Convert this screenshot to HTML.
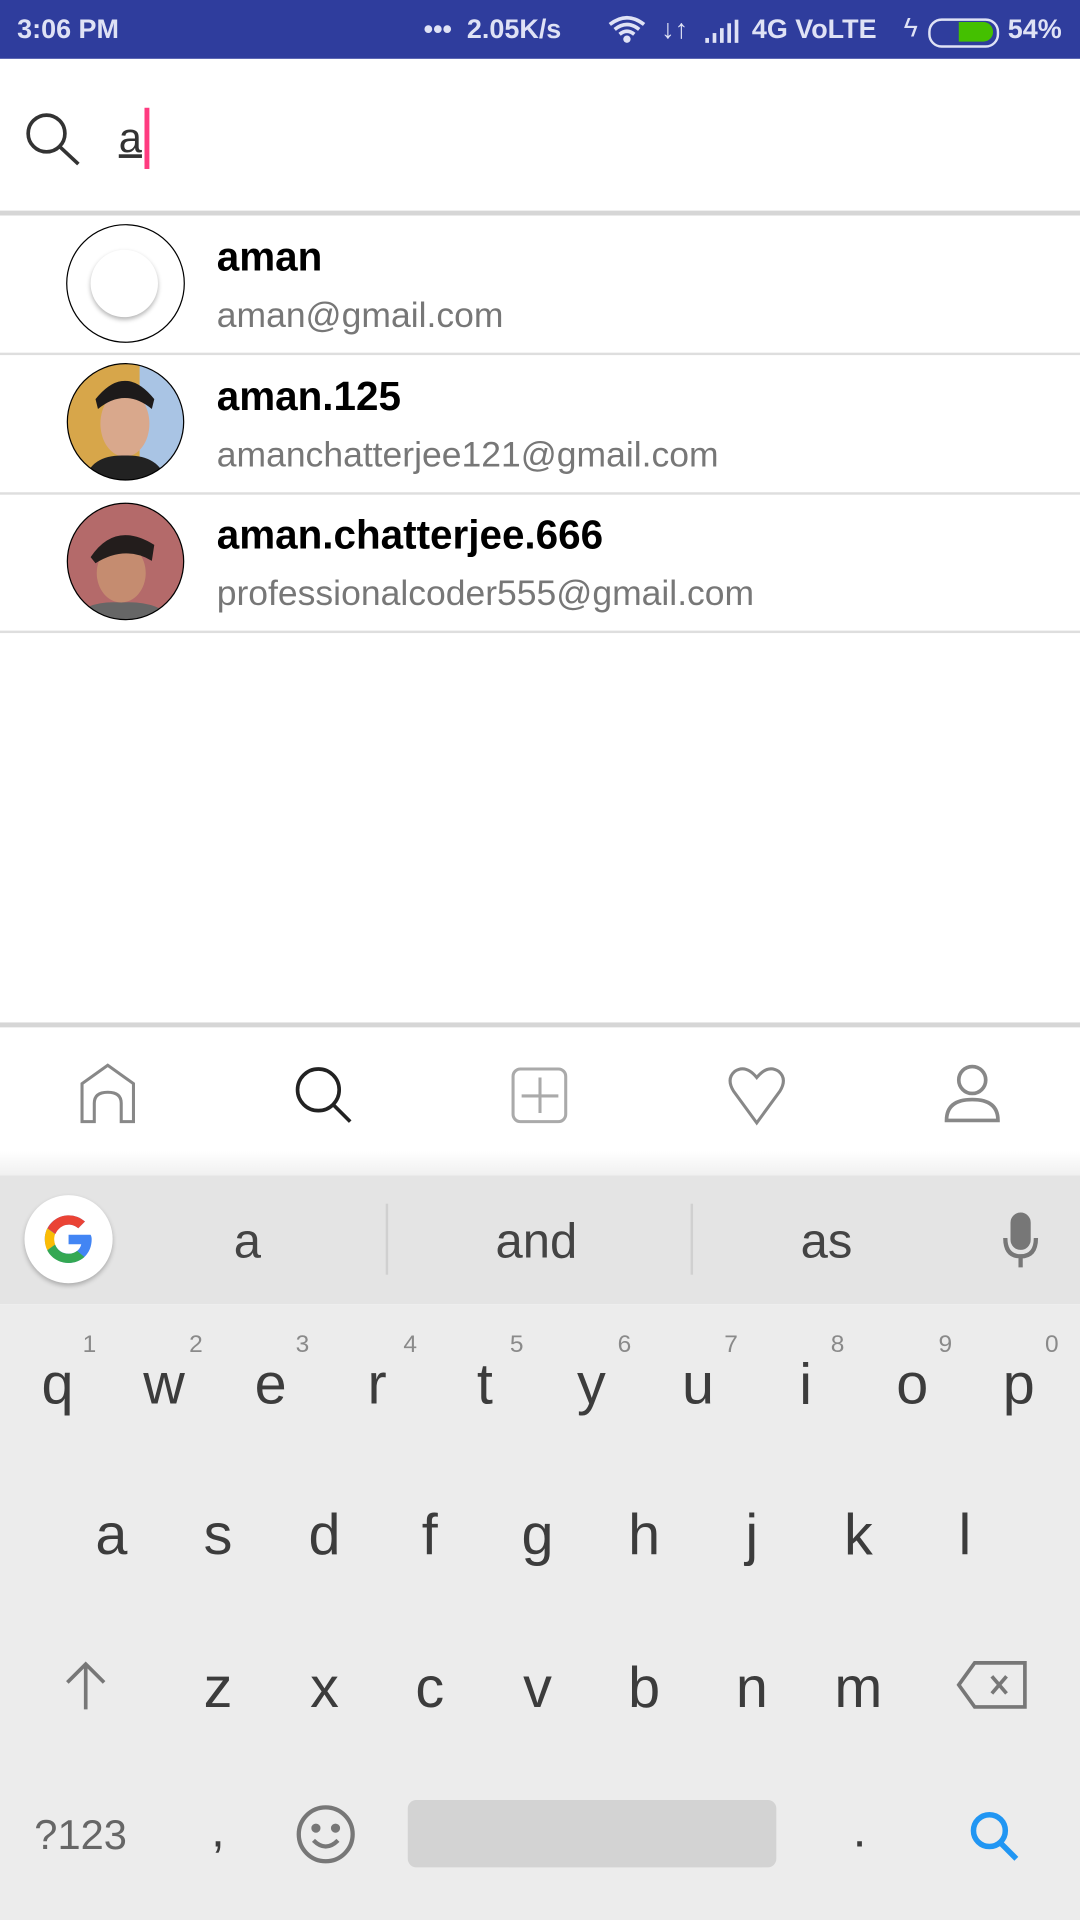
<!DOCTYPE html>
<html><head><meta charset="utf-8"><style>
html,body{margin:0;padding:0;width:1080px;height:1920px;overflow:hidden;background:#fff}
#s{position:absolute;left:0;top:0;width:882px;height:1568px;transform:scale(1.22449);transform-origin:0 0;font-family:"Liberation Sans",sans-serif}
.a{position:absolute}
.k{position:absolute;font-size:47px;color:#3c3c3c;width:60px;text-align:center;margin-left:-30px;line-height:1}
.n{position:absolute;font-size:20px;color:#8a8a8a;width:20px;text-align:center;margin-left:-10px;line-height:1}
.name{position:absolute;left:177px;font-size:33px;font-weight:bold;color:#000;line-height:1}
.mail{position:absolute;left:177px;font-size:29px;color:#777;line-height:1}
.sep{position:absolute;left:0;width:882px;height:2px;background:#dedede}
</style></head><body><div id="s">
<div class="a" style="left:0;top:0;width:882px;height:48px;background:#2f3d9d"></div>
<div class="a" style="left:14px;top:11px;font-size:22px;font-weight:bold;color:#dfe2f5">3:06 PM</div>
<div class="a" style="left:346px;top:11px;font-size:22px;font-weight:bold;color:#dfe2f5;white-space:pre">•••  2.05K/s</div>
<svg class="a" style="left:496px;top:12px" width="36" height="26" viewBox="0 0 36 26"><path d="M2 8 Q16 -3 30 8 M6 12 Q16 4 26 12 M10 16 Q16 11 22 16" stroke="#dfe2f5" stroke-width="3" fill="none"/><circle cx="16" cy="20" r="3" fill="#dfe2f5"/></svg>
<div class="a" style="left:540px;top:11px;font-size:22px;font-weight:bold;color:#dfe2f5">↓↑</div>
<svg class="a" style="left:574px;top:16px" width="32" height="20"><rect x="2" y="15" width="3" height="4" fill="#dfe2f5"/><rect x="8" y="11" width="3" height="8" fill="#dfe2f5"/><rect x="14" y="7" width="3" height="12" fill="#dfe2f5"/><rect x="20" y="3" width="3" height="16" fill="#dfe2f5"/><rect x="26" y="0" width="3" height="19" fill="#dfe2f5"/></svg>
<div class="a" style="left:614px;top:11px;font-size:22px;font-weight:bold;color:#dfe2f5">4G VoLTE</div>
<div class="a" style="left:738px;top:10px;font-size:22px;color:#dfe2f5">ϟ</div>
<div class="a" style="left:758px;top:15px;width:54px;height:20px;border:2px solid #dfe2f5;border-radius:11px"></div>
<div class="a" style="left:783px;top:18px;width:28px;height:16px;background:#44c000;border-radius:0 8px 8px 0"></div>
<div class="a" style="left:823px;top:11px;font-size:22px;font-weight:bold;color:#dfe2f5">54%</div>
<svg class="a" style="left:18px;top:90px" width="50" height="46"><circle cx="20" cy="19" r="15" stroke="#333" stroke-width="3" fill="none"/><line x1="31" y1="30" x2="46" y2="44" stroke="#333" stroke-width="3"/></svg>
<div class="a" style="left:97px;top:94px;font-size:34px;color:#333;text-decoration:underline">a</div>
<div class="a" style="left:118px;top:88px;width:4px;height:50px;background:#ff3b80"></div>
<div class="a" style="left:0;top:172px;width:882px;height:4px;background:#d6d6d6"></div>
<div class="a" style="left:54px;top:183px;width:95px;height:95px;border:1px solid #000;border-radius:50%;background:#fff"></div>
<div class="a" style="left:74px;top:204px;width:55px;height:55px;border-radius:50%;background:#fff;box-shadow:0 2px 4px rgba(0,0,0,.3)"></div>
<div class="name" style="top:193px">aman</div><div class="mail" style="top:244px">aman@gmail.com</div>
<div class="sep" style="top:288px"></div>
<svg class="a" style="left:54px;top:296px" width="97" height="97"><defs><clipPath id="c1"><circle cx="48.5" cy="48.5" r="47.5"/></clipPath></defs><g clip-path="url(#c1)"><rect width="97" height="97" fill="#d7a64a"/><rect x="60" width="40" height="97" fill="#a9c4e4"/><ellipse cx="48" cy="50" rx="20" ry="27" fill="#d9a88c"/><path d="M24 30 Q48 0 72 30 L70 38 Q48 20 26 38Z" fill="#1d1a1a"/><path d="M15 97 Q20 75 48 76 Q76 75 82 97Z" fill="#222"/></g><circle cx="48.5" cy="48.5" r="47.5" stroke="#000" fill="none"/></svg>
<div class="name" style="top:307px">aman.125</div><div class="mail" style="top:358px">amanchatterjee121@gmail.com</div>
<div class="sep" style="top:402px"></div>
<svg class="a" style="left:54px;top:410px" width="97" height="97"><defs><clipPath id="c2"><circle cx="48.5" cy="48.5" r="47.5"/></clipPath></defs><g clip-path="url(#c2)"><rect width="97" height="97" fill="#b46a6a"/><ellipse cx="45" cy="58" rx="20" ry="24" fill="#c58c70"/><path d="M20 45 Q40 15 72 35 L70 48 Q48 35 24 50Z" fill="#231d1c"/><path d="M5 97 Q15 80 45 82 Q75 80 90 97Z" fill="#666"/></g><circle cx="48.5" cy="48.5" r="47.5" stroke="#000" fill="none"/></svg>
<div class="name" style="top:420px">aman.chatterjee.666</div><div class="mail" style="top:471px">professionalcoder555@gmail.com</div>
<div class="sep" style="top:515px"></div>
<div class="a" style="left:0;top:835px;width:882px;height:4px;background:#d6d6d6"></div>
<svg class="a" style="left:60px;top:866px" width="60" height="56" fill="none" stroke-width="2.5"><path d="M7 50 V19 L28 4 L49 19 V50 H39 V35 Q39 26 28 26 Q17 26 17 35 V50 Z" stroke="#888"/></svg>
<svg class="a" style="left:238px;top:868px" width="54" height="52" fill="none"><circle cx="22" cy="22" r="17" stroke="#222" stroke-width="3"/><line x1="34" y1="34" x2="48" y2="48" stroke="#222" stroke-width="3"/></svg>
<svg class="a" style="left:415px;top:869px" width="52" height="52" fill="none" stroke="#aaa" stroke-width="2.5"><rect x="4" y="4" width="43" height="43" rx="6"/><line x1="26" y1="11" x2="26" y2="40"/><line x1="11" y1="26" x2="41" y2="26"/></svg>
<svg class="a" style="left:591px;top:869px" width="54" height="52" fill="none" stroke="#888" stroke-width="2.5"><path d="M27 48 L8 22 Q2 12 9 6 Q18 0 27 11 Q36 0 45 6 Q52 12 46 22 Z"/></svg>
<svg class="a" style="left:768px;top:867px" width="54" height="54" fill="none" stroke="#888" stroke-width="3"><circle cx="26" cy="15" r="11"/><path d="M5 48 Q5 31 26 31 Q47 31 47 48 Z"/></svg>
<div class="a" style="left:0;top:940px;width:882px;height:20px;background:linear-gradient(#fff,#f0f0f0)"></div>
<div class="a" style="left:0;top:960px;width:882px;height:105px;background:#e4e4e4"></div>
<div class="a" style="left:0;top:1065px;width:882px;height:503px;background:#ececec"></div>
<div class="a" style="left:20px;top:976px;width:72px;height:72px;border-radius:50%;background:#fff;box-shadow:0 2px 4px rgba(0,0,0,.25)"></div>
<svg class="a" style="left:34px;top:990px" width="44" height="44" viewBox="0 0 48 48"><path d="M43.6 20H24v8.5h11.3C34.2 33.6 29.8 37 24 37c-7.2 0-13-5.8-13-13s5.8-13 13-13c3.3 0 6.3 1.2 8.6 3.3l6-6C34.8 4.9 29.7 2.8 24 2.8 12.3 2.8 2.8 12.3 2.8 24S12.3 45.2 24 45.2c11 0 20.6-8 20.6-21.2 0-1.4-.2-2.7-1-4z" fill="#4285f4"/><path d="M5.3 14.3l7 5.1C14 15.1 18.6 11 24 11c3.3 0 6.3 1.2 8.6 3.3l6-6C34.8 4.9 29.7 2.8 24 2.8 15.9 2.8 8.9 7.4 5.3 14.3z" fill="#ea4335"/><path d="M24 45.2c5.5 0 10.4-1.9 14.1-5.3l-6.5-5.5C29.6 36 27 37 24 37c-5.7 0-10.2-3.4-12-8.3l-7 5.3C8.5 40.8 15.7 45.2 24 45.2z" fill="#34a853"/><path d="M12 28.7c-.5-1.5-.8-3.1-.8-4.7s.3-3.2.8-4.6l-7-5.1C3.6 17.2 2.8 20.5 2.8 24s.8 6.8 2.2 9.9z" fill="#fbbc05"/></svg>
<div class="a" style="left:172px;top:992px;width:60px;text-align:center;font-size:40px;color:#444">a</div>
<div class="a" style="left:315px;top:983px;width:2px;height:58px;background:#d0d0d0"></div>
<div class="a" style="left:388px;top:992px;width:100px;text-align:center;font-size:40px;color:#444">and</div>
<div class="a" style="left:564px;top:983px;width:2px;height:58px;background:#d0d0d0"></div>
<div class="a" style="left:625px;top:992px;width:100px;text-align:center;font-size:40px;color:#444">as</div>
<svg class="a" style="left:817px;top:990px" width="34" height="46" fill="none" stroke="#777" stroke-width="3.5"><rect x="10" y="2" width="13" height="27" rx="6.5" fill="#777"/><path d="M4 21 Q4 36 16.5 36 Q29 36 29 21 M16.5 36 V45"/></svg>
<div class="k" style="left:47px;top:1106px">q</div><div class="n" style="left:73px;top:1088px">1</div>
<div class="k" style="left:134px;top:1106px">w</div><div class="n" style="left:160px;top:1088px">2</div>
<div class="k" style="left:221px;top:1106px">e</div><div class="n" style="left:247px;top:1088px">3</div>
<div class="k" style="left:308px;top:1106px">r</div><div class="n" style="left:335px;top:1088px">4</div>
<div class="k" style="left:396px;top:1106px">t</div><div class="n" style="left:422px;top:1088px">5</div>
<div class="k" style="left:483px;top:1106px">y</div><div class="n" style="left:510px;top:1088px">6</div>
<div class="k" style="left:570px;top:1106px">u</div><div class="n" style="left:597px;top:1088px">7</div>
<div class="k" style="left:658px;top:1106px">i</div><div class="n" style="left:684px;top:1088px">8</div>
<div class="k" style="left:745px;top:1106px">o</div><div class="n" style="left:772px;top:1088px">9</div>
<div class="k" style="left:832px;top:1106px">p</div><div class="n" style="left:859px;top:1088px">0</div>
<div class="k" style="left:91px;top:1229px">a</div><div class="k" style="left:178px;top:1229px">s</div><div class="k" style="left:265px;top:1229px">d</div><div class="k" style="left:351px;top:1229px">f</div><div class="k" style="left:439px;top:1229px">g</div><div class="k" style="left:526px;top:1229px">h</div><div class="k" style="left:614px;top:1229px">j</div><div class="k" style="left:701px;top:1229px">k</div><div class="k" style="left:788px;top:1229px">l</div>
<svg class="a" style="left:50px;top:1355px" width="40" height="42" fill="none" stroke="#777" stroke-width="3"><path d="M20 41 V4 M5 19 L20 4 L35 19"/></svg>
<div class="k" style="left:178px;top:1354px">z</div><div class="k" style="left:265px;top:1354px">x</div><div class="k" style="left:351px;top:1354px">c</div><div class="k" style="left:439px;top:1354px">v</div><div class="k" style="left:526px;top:1354px">b</div><div class="k" style="left:614px;top:1354px">n</div><div class="k" style="left:701px;top:1354px">m</div>
<svg class="a" style="left:780px;top:1355px" width="62" height="42" fill="none" stroke="#777" stroke-width="3"><path d="M16 3 H57 V39 H16 L3 21 Z"/><path d="M30 14 L42 28 M42 14 L30 28"/></svg>
<div class="a" style="left:28px;top:1480px;font-size:34px;color:#666">?123</div>
<div class="k" style="left:178px;top:1475px;font-size:40px">,</div>
<svg class="a" style="left:240px;top:1472px" width="52" height="52" fill="none" stroke="#777" stroke-width="3.5"><circle cx="26" cy="26" r="22"/><circle cx="18" cy="21" r="2" fill="#777"/><circle cx="34" cy="21" r="2" fill="#777"/><path d="M16 31 Q26 41 36 31"/></svg>
<div class="a" style="left:333px;top:1470px;width:301px;height:55px;background:#d3d3d3;border-radius:7px"></div>
<div class="k" style="left:702px;top:1475px;font-size:40px">.</div>
<svg class="a" style="left:790px;top:1477px" width="46" height="46" fill="none" stroke="#2196f3" stroke-width="4.5"><circle cx="18" cy="18" r="13"/><line x1="27" y1="28" x2="40" y2="41"/></svg>
</div></body></html>
